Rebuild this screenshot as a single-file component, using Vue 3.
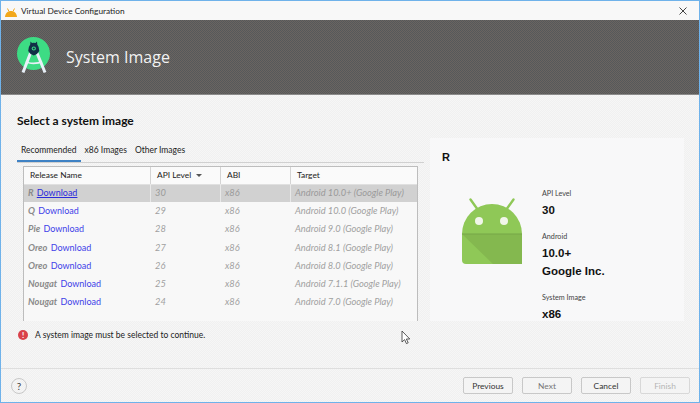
<script setup>
const rows = [
  { name: 'R', api: 30, target: 'Android 10.0+ (Google Play)', selected: true },
  { name: 'Q', api: 29, target: 'Android 10.0 (Google Play)' },
  { name: 'Pie', api: 28, target: 'Android 9.0 (Google Play)' },
  { name: 'Oreo', api: 27, target: 'Android 8.1 (Google Play)' },
  { name: 'Oreo', api: 26, target: 'Android 8.0 (Google Play)' },
  { name: 'Nougat', api: 25, target: 'Android 7.1.1 (Google Play)' },
  { name: 'Nougat', api: 24, target: 'Android 7.0 (Google Play)' }
]
</script>

<template>
  <div class="window">
    <header class="titlebar">
      <svg class="title-icon" viewBox="0 0 12 9" width="12" height="9">
        <path d="M0 9 C0.3 5 3 3 6 3 C9 3 11.7 5 12 9 Z" fill="#f2a81c" />
        <path d="M2.5 0.5 L4 3.5 M9.5 0.5 L8 3.5" stroke="#f2a81c" stroke-width="1" />
      </svg>
      <span class="title-text">Virtual Device Configuration</span>
      <svg class="close" viewBox="0 0 8 8" width="8" height="8">
        <path d="M0.5 0.5 L7.5 7.5 M7.5 0.5 L0.5 7.5" stroke="#444" stroke-width="1" />
      </svg>
    </header>

    <section class="banner">
      <svg class="logo" viewBox="0 0 34 37" width="34" height="37">
        <circle cx="16.5" cy="16.5" r="16.5" fill="#3ddc84" />
        <path d="M13.5 16 L6 35.5 M20 16 L28 35.5" stroke="#e8f0f8" stroke-width="3" fill="none" />
        <path d="M9 24.5 C12 27 21 27 25 24.5" stroke="#e8f0f8" stroke-width="1.6" fill="none" />
        <path d="M13.5 4.5 L15 6 Q16.7 5.4 18.5 6 L20 4.5 L20.3 7.5 Q22.3 10 22.3 14 Q20.5 17.5 16.8 18.5 Q13 17.5 11.2 14 Q11.2 10 13.2 7.5 Z" fill="#123047" />
        <circle cx="16.8" cy="11.5" r="2.1" fill="#3ddc84" />
        <circle cx="16.8" cy="11.5" r="1.1" fill="#123047" />
      </svg>
      <h1 class="banner-title">System Image</h1>
    </section>

    <main class="content">
      <h2 class="heading">Select a system image</h2>
      <div class="columns">
        <div class="left">
          <nav class="tabs">
            <span class="tab active">Recommended</span>
            <span class="tab">x86 Images</span>
            <span class="tab">Other Images</span>
          </nav>
          <div class="table">
            <div class="thead">
              <div class="th">Release Name</div>
              <div class="th">API Level <i class="sort"></i></div>
              <div class="th">ABI</div>
              <div class="th last">Target</div>
            </div>
            <div v-for="r in rows" :key="r.api" class="tr" :class="{ selected: r.selected }">
              <div class="td first"><b>{{ r.name }}</b> <a class="link">Download</a></div>
              <div class="td">{{ r.api }}</div>
              <div class="td">x86</div>
              <div class="td">{{ r.target }}</div>
            </div>
          </div>
        </div>

        <aside class="detail">
          <div class="detail-name">R</div>
          <div class="detail-body">
            <svg class="android" viewBox="0 0 62 68" width="62" height="68">
              <path d="M9.5 1.5 L17 12 M52.5 1.5 L45 12" stroke="#8fc857" stroke-width="2.4" stroke-linecap="round" />
              <path d="M1 36 A30 30 0 0 1 61 36 Z" fill="#8fc857" />
              <path d="M1 36 H61 V62 A4 4 0 0 1 57 66 H5 A4 4 0 0 1 1 62 Z" fill="#8fc857" />
              <path d="M1 36 H61 V66 H32 Z" fill="#84b84f" />
              <rect x="1" y="35.5" width="60" height="1" fill="#76a648" />
              <circle cx="18" cy="23" r="4" fill="#f1f6ea" />
              <circle cx="43" cy="23" r="4" fill="#f1f6ea" />
            </svg>
            <dl class="facts">
              <dt>API Level</dt>
              <dd>30</dd>
              <dt>Android</dt>
              <dd>10.0+</dd>
              <dd>Google Inc.</dd>
              <dt>System Image</dt>
              <dd>x86</dd>
            </dl>
          </div>
        </aside>
      </div>

      <div class="error">
        <span class="error-icon">!</span>
        <span>A system image must be selected to continue.</span>
        <svg class="cursor" viewBox="0 0 10 15" width="10" height="15">
          <path d="M1 1 V12 L3.6 9.6 L5.4 13.6 L7.2 12.8 L5.4 9 H8.8 Z" fill="#fff" stroke="#333" stroke-width="0.8" />
        </svg>
      </div>
    </main>

    <footer class="footer">
      <span class="help">?</span>
      <div class="buttons">
        <button class="btn">Previous</button>
        <button class="btn muted">Next</button>
        <button class="btn">Cancel</button>
        <button class="btn faint">Finish</button>
      </div>
    </footer>
  </div>
</template>

<style>
html, body { margin: 0; padding: 0; background: #f2f2f2; }
</style>

<style scoped>
.window {
  width: 700px;
  height: 403px;
  box-sizing: border-box;
  border: 1px solid #6fb2ea;
  display: flex;
  flex-direction: column;
  overflow: hidden;
  background: repeating-conic-gradient(#f0f0f0 0 25%, #f6f6f6 0 50%) 0 0 / 2px 2px;
  font-family: Lato, "Open Sans", sans-serif;
  color: #222;
}
.titlebar {
  height: 19px;
  flex: none;
  display: flex;
  align-items: center;
  background: #f8f8f8;
  position: relative;
}
.title-icon { margin-left: 4px; margin-top: 3px; }
.title-text { margin-left: 4px; font-size: 8.3px; color: #222; }
.close { margin-left: auto; margin-right: 12px; }
.banner {
  height: 75px;
  flex: none;
  display: flex;
  align-items: center;
  background: repeating-conic-gradient(#55595b 0 25%, #6b6460 0 50%) 0 0 / 2px 2px;
  border-bottom: 1px solid #8a8a8a;
  box-sizing: border-box;
}
.logo { margin-left: 16px; margin-bottom: 4px; }
.banner-title {
  margin: 0 0 0 15px;
  font-family: "Open Sans", sans-serif;
  font-size: 16px;
  font-weight: 400;
  color: #f2f2f2;
}
.content {
  flex: 1;
  display: flex;
  flex-direction: column;
  padding: 0 14px 0 16px;
  min-height: 0;
}
.heading {
  margin: 18px 0 0;
  font-size: 12px;
  line-height: 16px;
  font-weight: 700;
  color: #111;
}
.columns { display: flex; gap: 6px; margin-top: 9px; }
.left { width: 407px; flex: none; }
.tabs {
  display: flex;
  height: 24px;
  border-bottom: 1px solid #d0d0d0;
  font-size: 8.5px;
}
.tab { padding: 6px 4px 0; line-height: 12px; }
.tab.active { border-bottom: 2px solid #3f82c4; margin-bottom: -1px; height: 16px; }
.table {
  margin: 3px 6px 0;
  height: 154px;
  border: 1px solid #bdbdbd;
  border-bottom: 0;
  background: #f8f8f8;
  font-size: 9.3px;
}
.thead, .tr {
  display: grid;
  grid-template-columns: 127px 70px 70px 1fr;
}
.thead { height: 17px; background: #fafafa; font-size: 8.4px; }
.th {
  padding-left: 6px;
  line-height: 17px;
  border-right: 1px solid #d4d4d4;
  border-bottom: 1px solid #e0e0e0;
  box-sizing: border-box;
}
.th.last { border-right: 0; }
.sort {
  display: inline-block;
  margin-left: 3px;
  vertical-align: 1px;
  border: 3px solid transparent;
  border-top: 3px solid #555;
  border-bottom: 0;
}
.tr { height: 18.2px; line-height: 18px; color: #a0a0a0; font-style: italic; }
.tr.selected { background: #d1d1d1; color: #9a9a9a; }
.tr.selected .td { border-right: 1px solid #e8e8e8; box-sizing: border-box; }
.tr.selected .td:last-child { border-right: 0; }
.td { padding-left: 4px; }
.td b { color: #8a8a8a; font-weight: 700; margin-right: 1px; }
.link { color: #3f3fe8; font-style: normal; font-size: 9px; }
.tr.selected .link { color: #2b2bdc; text-decoration: underline; }
.detail {
  width: 254px;
  flex: none;
  height: 183px;
  background: #f8f8f9;
  box-sizing: border-box;
  padding: 13px 12px 0;
  overflow: hidden;
}
.detail-name { font-family: "Liberation Sans", sans-serif; font-weight: 700; font-size: 11px; line-height: 12px; color: #111; }
.detail-body { display: flex; margin-top: 15px; }
.android { margin-left: 19px; margin-top: 20px; flex: none; }
.facts { margin: 11px 0 0 19px; }
.facts dt { font-size: 7.2px; line-height: 10px; color: #444; margin-top: 13px; }
.facts dt:first-child { margin-top: 0; }
.facts dd {
  margin: 2px 0 0;
  font-family: "Liberation Sans", sans-serif;
  font-weight: 700;
  font-size: 11.5px;
  line-height: 18px;
  color: #111;
}
.facts dd + dd { margin-top: 0; }
.error {
  display: flex;
  align-items: center;
  height: 16px;
  margin-top: 6px;
  font-size: 8.5px;
  position: relative;
  color: #222;
}
.error-icon {
  width: 10px;
  height: 10px;
  border-radius: 50%;
  background: #d9414a;
  color: #fff;
  font-size: 8px;
  font-weight: 700;
  line-height: 10px;
  text-align: center;
  margin-left: 1px;
  margin-right: 7px;
}
.cursor { position: absolute; left: 384px; top: 3px; }
.footer {
  margin-top: auto;
  height: 33px;
  flex: none;
  display: flex;
  align-items: center;
  border-top: 1px solid #dedede;
  padding: 0 9px 0 10px;
}
.help {
  width: 14px;
  height: 14px;
  border: 1px solid #c8c8c8;
  border-radius: 50%;
  text-align: center;
  font-size: 10px;
  line-height: 14px;
  color: #444;
}
.buttons { margin-left: auto; display: flex; gap: 9px; }
.btn {
  width: 50px;
  height: 17px;
  padding: 0;
  box-sizing: border-box;
  background: #f4f4f4;
  border: 1px solid #c8c8c8;
  border-radius: 2px;
  font-family: Lato, sans-serif;
  font-size: 8.4px;
  color: #333;
}
.btn.muted { color: #777; }
.btn.faint { color: #b4b4b4; border-color: #d8d8d8; }
</style>
